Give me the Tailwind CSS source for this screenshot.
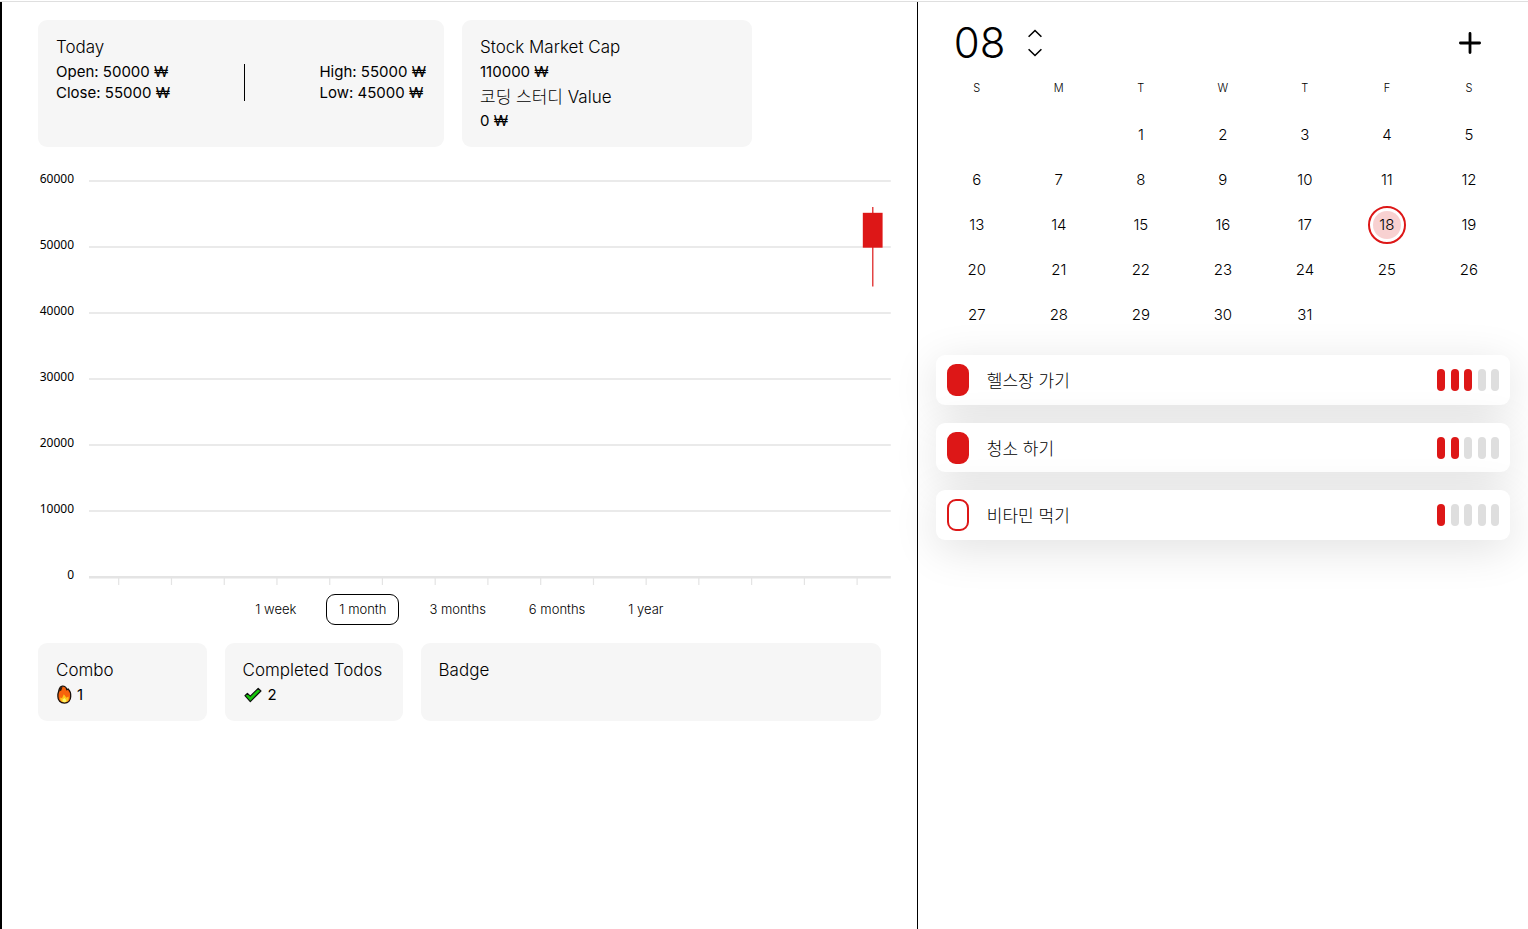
<!DOCTYPE html>
<html lang="en">
<head>
<meta charset="utf-8">
<meta name="viewport" content="width=device-width, initial-scale=1">
<title>Todo Stocks</title>
<script src="https://cdn.jsdelivr.net/npm/@tailwindcss/browser@4"></script>
</head>
<body class="bg-white text-black font-['Inter','Noto_Sans_CJK_KR',sans-serif]">
<div class="flex min-h-screen flex-col pt-px">
<div class="h-px bg-[#dfdfdf]"></div>
<div class="grid flex-1 grid-cols-[3fr_2fr]">
  <main class="min-w-0 border-l-2 border-black px-9 pt-[18px]">
    <section class="flex gap-[18px]">
      <article class="w-[406px] rounded-[9px] bg-[#f6f6f6] px-[18px] pt-4 pb-4">
        <h2 class="mb-[3px] text-[17px] leading-[22px] font-light">Today</h2>
        <div class="flex items-start justify-between text-[15px] leading-[21px]">
          <div><p>Open: 50000 ₩</p><p>Close: 55000 ₩</p></div>
          <div class="mt-[3px] h-[37px] w-px bg-black"></div>
          <div><p>High: 55000 ₩</p><p>Low: 45000 ₩</p></div>
        </div>
      </article>
      <article class="w-[290px] rounded-[9px] bg-[#f6f6f6] px-[18px] pt-4 pb-4">
        <h2 class="mb-[3px] text-[17px] leading-[22px] font-light">Stock Market Cap</h2>
        <p class="mb-1 text-[15px] leading-[21px]">110000 ₩</p>
        <h2 class="mb-0.5 text-[17px] leading-[22px] font-light">코딩 스터디 Value</h2>
        <p class="text-[15px] leading-[21px]">0 ₩</p>
      </article>
    </section>

    <section class="mt-[23px] -mr-[10px] flex" aria-label="Price chart">
      <div class="flex w-9 flex-col text-right text-[12px] leading-[18px] font-['Noto_Sans',sans-serif]">
        <span class="h-[66px]">60000</span><span class="h-[66px]">50000</span><span class="h-[66px]">40000</span><span class="h-[66px]">30000</span><span class="h-[66px]">20000</span><span class="h-[66px]">10000</span><span>0</span>
      </div>
      <svg class="mt-[10px] ml-[15px] h-[406px] min-w-0 flex-1" viewBox="0 0 802 406" preserveAspectRatio="none" fill="none">
        <g stroke="#e4e4e4" stroke-width="1.5">
          <path d="M0 .9H802M0 66.9H802M0 132.9H802M0 198.9H802M0 264.9H802M0 330.9H802"/>
          <path stroke-width="2.6" d="M0 397.3H802"/>
          <path stroke-width="1.2" d="M29.7 398v7M82.5 398v7M135.3 398v7M188 398v7M240.8 398v7M293.5 398v7M346.3 398v7M399 398v7M451.8 398v7M504.6 398v7M557.3 398v7M610 398v7M662.8 398v7M715.6 398v7M768.3 398v7"/>
        </g>
        <path d="M784 27v79.5" stroke="#dd1717" stroke-width="1.2"/>
        <path d="M774 32.8h19.8v34.9H774z" fill="#dd1717"/>
      </svg>
    </section>

    <nav class="mt-2 flex justify-center gap-[17px] text-[13px] leading-[17px] font-light" aria-label="Chart range">
      <button class="rounded-[9px] border border-transparent px-3 py-1.5">1 week</button>
      <button class="rounded-[9px] border border-black px-3 py-1.5">1 month</button>
      <button class="rounded-[9px] border border-transparent px-3 py-1.5">3 months</button>
      <button class="rounded-[9px] border border-transparent px-3 py-1.5">6 months</button>
      <button class="rounded-[9px] border border-transparent px-3 py-1.5">1 year</button>
    </nav>

    <section class="mt-[18px] flex gap-[18px]">
      <article class="w-1/5 rounded-[9px] bg-[#f6f6f6] px-[18px] pt-4 pb-4">
        <h2 class="mb-[3px] text-[17px] leading-[22px] font-light">Combo</h2>
        <p class="flex items-center gap-1 text-[15px] leading-[21px]">
          <svg class="h-[19px] w-[17px]" viewBox="0 0 17 19" aria-hidden="true"><path d="M6.2 1.2C8.500.8 10.400 2.600 10.800 4.700L12.300 4.100C14.400 6.300 15 8.500 14.700 11.500C14.700 15.500 12 18 8.500 18C4.500 18 1.800 15.500 1.900 11.500C1.500 9 2.500 6.500 3.300 4C3.800 2.500 4.500 1.500 6.200 1.200Z" fill="#f7630c" stroke="#1a120c" stroke-width="1.300"/><path d="M3.200 6.500C3.500 3.500 4.500 2 6.500 2L5.300 5.500Z" fill="#2b1a10"/><path d="M8.300 17.300C5.500 17.300 4 15.500 4.200 12.500L6 13.300L7.800 9.300L10.500 12.800L12.500 11.500C13.300 15 11.500 17.300 8.300 17.300Z" fill="#fcc51b"/><path d="M8.400 17.300C6.800 17.300 6 16.200 6.800 14.500L8.400 13L10.200 15C10.600 16.300 9.800 17.300 8.400 17.300Z" fill="#fff36b"/></svg>
          <span>1</span>
        </p>
      </article>
      <article class="w-[178px] shrink-0 rounded-[9px] bg-[#f6f6f6] px-[18px] pt-4 pb-4">
        <h2 class="mb-[3px] text-[17px] leading-[22px] font-light">Completed Todos</h2>
        <p class="flex items-center gap-1.5 text-[15px] leading-[21px]">
          <svg class="h-[16px] w-[19px]" viewBox="0 0 19 16" aria-hidden="true"><path d="M2 8.700L4.400 6.300L7.300 9.200L15.200 1.300L17.900 4L7.300 14.600Z" fill="#16c60c" stroke="#111" stroke-width="1.200" stroke-linejoin="round"/></svg>
          <span>2</span>
        </p>
      </article>
      <article class="min-w-0 flex-1 rounded-[9px] bg-[#f6f6f6] px-[18px] pt-4 pb-4">
        <h2 class="text-[17px] leading-[22px] font-light">Badge</h2>
      </article>
    </section>
  </main>

  <aside class="min-w-0 border-l border-black px-[18px] pt-[18px]">
    <header class="flex h-[45px] items-center pr-[29px] pl-[18px]">
      <h1 class="text-[42px] leading-[45px] font-light">08</h1>
      <div class="ml-[23px] flex flex-col">
        <button class="block" aria-label="Next month"><svg class="h-[19px] w-[14px]" viewBox="0 0 14 19" fill="none" stroke="#000" stroke-width="1.600"><path d="M.6 12.800L7 6.500L13.400 12.800"/></svg></button>
        <button class="block" aria-label="Previous month"><svg class="h-[19px] w-[14px]" viewBox="0 0 14 19" fill="none" stroke="#000" stroke-width="1.600"><path d="M.6 6.200L7 12.500L13.400 6.200"/></svg></button>
      </div>
      <button class="ml-auto" aria-label="Add todo"><svg class="h-[22px] w-[22px]" viewBox="0 0 22 22" fill="none" stroke="#000" stroke-width="2.800" stroke-linecap="round"><path d="M11 1.400V20.600M1.400 11H20.600"/></svg></button>
    </header>

    <table class="mt-[13px] w-full table-fixed text-center text-[15px] leading-[21px] font-light">
      <thead>
        <tr class="h-[34px] align-top text-[11px] leading-[20px]"><th class="font-light">S</th><th class="font-light">M</th><th class="font-light">T</th><th class="font-light">W</th><th class="font-light">T</th><th class="font-light">F</th><th class="font-light">S</th></tr>
      </thead>
      <tbody>
        <tr class="h-[45px]"><td></td><td></td><td>1</td><td>2</td><td>3</td><td>4</td><td>5</td></tr>
        <tr class="h-[45px]"><td>6</td><td>7</td><td>8</td><td>9</td><td>10</td><td>11</td><td>12</td></tr>
        <tr class="h-[45px]"><td>13</td><td>14</td><td>15</td><td>16</td><td>17</td><td><span class="mx-auto flex size-[38px] items-center justify-center rounded-full border-2 border-[#dd1717]"><span class="flex size-7 items-center justify-center rounded-full bg-[#dd1717]/20">18</span></span></td><td>19</td></tr>
        <tr class="h-[45px]"><td>20</td><td>21</td><td>22</td><td>23</td><td>24</td><td>25</td><td>26</td></tr>
        <tr class="h-[45px]"><td>27</td><td>28</td><td>29</td><td>30</td><td>31</td><td></td><td></td></tr>
      </tbody>
    </table>

    <ul class="mt-[18px] flex flex-col gap-[18px] text-[17px] leading-6 font-light">
      <li class="flex h-[50px] items-center rounded-[9px] bg-white pr-[11px] pl-[11px] shadow-[0_9px_45px_rgba(0,0,0,0.12)]">
        <input id="t1" type="checkbox" checked class="h-8 w-[22px] appearance-none rounded-[9px] border-2 border-[#dd1717] checked:bg-[#dd1717]">
        <label for="t1" class="ml-[18px] flex-1 pt-0.5">헬스장 가기</label>
        <span class="flex w-[62px] justify-between" role="img" aria-label="3 of 5"><i class="h-[22px] w-2 rounded bg-[#dd1717]"></i><i class="h-[22px] w-2 rounded bg-[#dd1717]"></i><i class="h-[22px] w-2 rounded bg-[#dd1717]"></i><i class="h-[22px] w-2 rounded bg-[#dedede]"></i><i class="h-[22px] w-2 rounded bg-[#dedede]"></i></span>
      </li>
      <li class="flex h-[49px] items-center rounded-[9px] bg-white pr-[11px] pl-[11px] shadow-[0_9px_45px_rgba(0,0,0,0.12)]">
        <input id="t2" type="checkbox" checked class="h-8 w-[22px] appearance-none rounded-[9px] border-2 border-[#dd1717] checked:bg-[#dd1717]">
        <label for="t2" class="ml-[18px] flex-1 pt-0.5">청소 하기</label>
        <span class="flex w-[62px] justify-between" role="img" aria-label="2 of 5"><i class="h-[22px] w-2 rounded bg-[#dd1717]"></i><i class="h-[22px] w-2 rounded bg-[#dd1717]"></i><i class="h-[22px] w-2 rounded bg-[#dedede]"></i><i class="h-[22px] w-2 rounded bg-[#dedede]"></i><i class="h-[22px] w-2 rounded bg-[#dedede]"></i></span>
      </li>
      <li class="flex h-[50px] items-center rounded-[9px] bg-white pr-[11px] pl-[11px] shadow-[0_9px_45px_rgba(0,0,0,0.12)]">
        <input id="t3" type="checkbox" class="h-8 w-[22px] appearance-none rounded-[9px] border-2 border-[#dd1717] checked:bg-[#dd1717]">
        <label for="t3" class="ml-[18px] flex-1 pt-0.5">비타민 먹기</label>
        <span class="flex w-[62px] justify-between" role="img" aria-label="1 of 5"><i class="h-[22px] w-2 rounded bg-[#dd1717]"></i><i class="h-[22px] w-2 rounded bg-[#dedede]"></i><i class="h-[22px] w-2 rounded bg-[#dedede]"></i><i class="h-[22px] w-2 rounded bg-[#dedede]"></i><i class="h-[22px] w-2 rounded bg-[#dedede]"></i></span>
      </li>
    </ul>
  </aside>
</div>
</div>
</body>
</html>
